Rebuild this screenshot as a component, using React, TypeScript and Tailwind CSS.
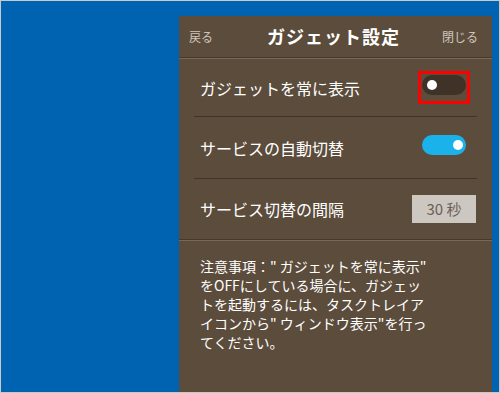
import React, { useState } from 'react';

const font = { fontFamily: '"Noto Sans CJK JP", "Noto Sans", sans-serif' };

function Toggle({ on, onClick }: { on: boolean; onClick: () => void }) {
  return (
    <button
      onClick={onClick}
      className={`relative w-[44px] h-[20px] rounded-full ${on ? 'bg-[#1bb1ea]' : 'bg-[#3f3328]'}`}
    >
      <span
        className={`absolute top-[5px] w-[10px] h-[10px] rounded-full bg-white ${on ? 'left-[31px]' : 'left-[5px]'}`}
      />
    </button>
  );
}

export default function App() {
  const [always, setAlways] = useState(false);
  const [auto, setAuto] = useState(true);

  return (
    <div className="w-[500px] h-[393px] bg-[#0063b1] border border-[#c9c9c9] overflow-hidden" style={font}>
      <div className="ml-[178px] mt-[15px] w-[313px] h-[377px] bg-[#5c4c3c] flex flex-col">
        {/* ヘッダー */}
        <div className="h-[41px] flex items-center justify-between pl-[10px] pr-[14px]">
          <span className="text-[12px] text-[#cfc6bc] w-[36px]">戻る</span>
          <span className="text-[18px] font-bold text-white tracking-[1px]">ガジェット設定</span>
          <span className="text-[12px] text-[#cfc6bc] w-[36px] text-right">閉じる</span>
        </div>
        <div className="h-[1px] bg-[#45382c]" />
        <div className="h-[1px] bg-[#76695b]" />

        {/* 設定項目 */}
        <div className="mx-[15px]">
          <div className="h-[58px] flex items-center justify-between pl-[6px] border-b border-[#3f3429]">
            <span className="text-[16px] text-white">ガジェットを常に表示</span>
            <div className="mr-[7px] p-[1px] border-[3px] border-[#ff0000]">
              <Toggle on={always} onClick={() => setAlways(!always)} />
            </div>
          </div>
          <div className="h-[62px] flex items-center justify-between pl-[6px] border-b border-[#3f3429]">
            <span className="text-[16px] text-white">サービスの自動切替</span>
            <div className="mr-[11px]">
              <Toggle on={auto} onClick={() => setAuto(!auto)} />
            </div>
          </div>
          <div className="h-[60px] flex items-center justify-between pl-[6px]">
            <span className="text-[16px] text-white">サービス切替の間隔</span>
            <div className="w-[64px] h-[28px] mr-[1px] bg-[#cdc7c1] flex items-center justify-center text-[15px] text-[#6c6056]">
              30 秒
            </div>
          </div>
        </div>
        <div className="h-[1px] bg-[#45382c]" />
        <div className="h-[1px] bg-[#76695b]" />

        {/* 注意事項 */}
        <div className="pl-[21px] pt-[16px] text-[14px] leading-[19px] text-white">
          注意事項：" ガジェットを常に表示"
          <br />
          をOFFにしている場合に、ガジェッ
          <br />
          トを起動するには、タスクトレイア
          <br />
          イコンから" ウィンドウ表示"を行っ
          <br />
          てください。
        </div>
      </div>
    </div>
  );
}
